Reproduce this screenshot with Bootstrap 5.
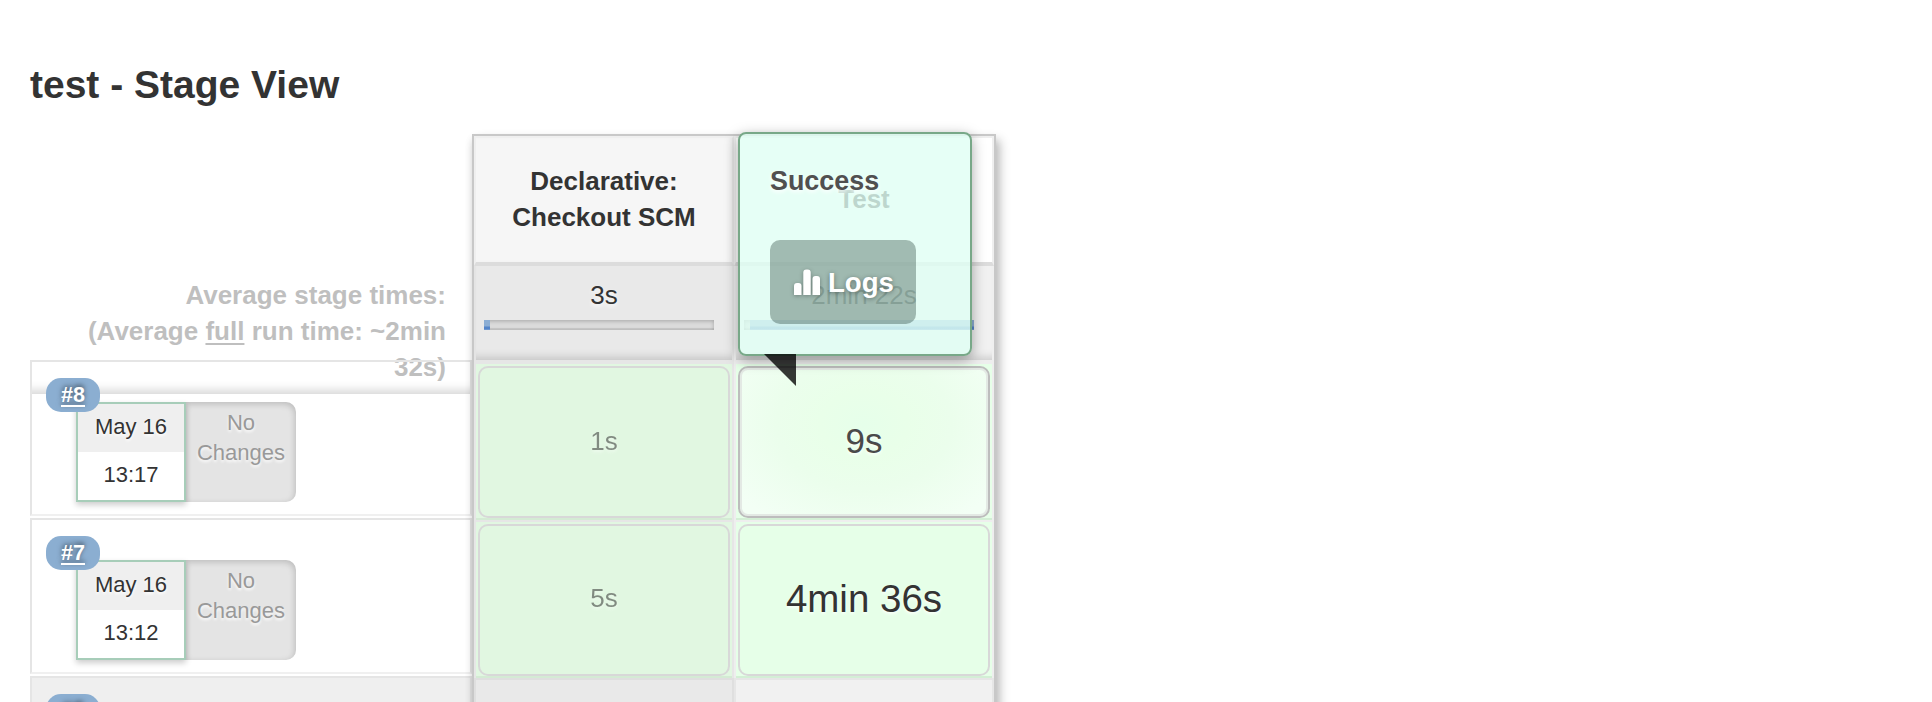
<!DOCTYPE html>
<html lang="en">
<head>
<meta charset="utf-8">
<title>test - Stage View</title>
<link href="https://cdn.jsdelivr.net/npm/bootstrap@5.3.0/dist/css/bootstrap.min.css" rel="stylesheet">
<style>
html, body { height: 702px; overflow: hidden; }
body { font: 26px/36px "Liberation Sans", Arial, sans-serif; color: #333; background: #fff; }
main { height: 702px; overflow: hidden; padding-left: 30px; }
.view-title { font-size: 39px; line-height: 44px; font-weight: 700; padding-top: 63px; height: 134px; }
.runs { width: 442px; }
.runs-head { height: 260px; padding: 143px 26px 0 40px; color: #bfbfbf; font-weight: 700;
  box-shadow: inset 0 -14px 10px -10px rgba(0,0,0,.16); }
.runs-head span { text-decoration-thickness: 1px; text-underline-offset: 3px; }
.runs-list { margin-top: -34px; }
.run { height: 156px; border: 2px solid #e5e5e5; border-bottom-color: #f0f0f0; margin-bottom: 2px; padding: 40px 0 0 44px; font-size: 22px; }
.run-muted { background: #efefef; }
.run-id { left: 14px; top: 16px; width: 54px; height: 34px; line-height: 34px; border-radius: 15px; background: #8baed1;
  color: #fff; font-weight: 700; font-size: 21.6px; text-shadow: 0 -2px 5px rgba(0,0,0,.55); text-underline-offset: 3px; }
.when { width: 110px; height: 100px; border: 2px solid #a7cdb9; box-shadow: 0 3px 6px rgba(0,0,0,.2); z-index: 1; text-shadow: 0 2px 3px #fff; }
.when div { height: 48px; line-height: 46px; }
.when div:first-child { background: #efefef; }
.changes { width: 110px; height: 100px; background: #e4e4e4; border-radius: 0 10px 10px 0; color: #999; line-height: 30px; padding: 6px 0 0;
  box-shadow: inset -1px 2px 6px rgba(0,0,0,.18); text-shadow: 0 2px 3px #fff; }
.board { width: 524px; height: 620px; border: 2px solid #c8c8c8; box-shadow: 4px 6px 10px rgba(0,0,0,.24), 0 6px 8px rgba(0,0,0,.1); display: grid; grid-template-columns: 260px 260px; align-content: start; }
.stage { height: 130px; border: 2px solid #efefef; border-bottom: 4px solid #dcdcdc; padding-bottom: 2px; font-weight: 700; background: #fff; }
.avg { height: 96px; border: solid #efefef; border-width: 0 2px; padding: 11px 8px 0; background: #f1f1f1; box-shadow: inset 0 -12px 10px -8px rgba(0,0,0,.18); text-shadow: 0 2px 4px #fff; line-height: 36px; }
.odd.stage { background: #f6f6f6; box-shadow: inset -4px 0 6px -3px rgba(0,0,0,.06); border-right-color: #e4e4e4; }
.odd.avg { background: #e9e9e9; border-color: #e4e4e4; }
.meter { width: 230px; height: 10px; margin-top: 7px; background: #dcdcdc; box-shadow: inset 0 1px 4px rgba(0,0,0,.25), inset 0 -2px 0 #ccc; }
.meter-fill { height: 10px; background: linear-gradient(#8caed4 0 55%, #467bc6 80%, #7ca2d4); }
.cell { height: 158px; border: 2px solid #eee; border-width: 2px 2px 0; background: #e6ffe8; box-shadow: inset 0 -2px 0 #d3efd5; padding: 2px 2px 4px; }
.odd.cell { background: #e1f7e1; border-color: #e6e6e6; box-shadow: inset 0 -2px 0 #d4ebd4; }
.first-row { border-top-width: 4px; height: 160px; margin-top: -2px; }
.pill { height: 152px; border: 2px solid #d8d8d8; border-radius: 10px; padding-bottom: 4px; text-shadow: 0 2px 3px rgba(255,255,255,.8); }
.first-row .pill { padding-bottom: 2px; }
.odd .pill > span { opacity: .55; }
.pill.hot { border-color: #bdbdbd; box-shadow: inset 0 0 0 2px #e3e9e4; font-size: 35px; color: #4a4a4a;
  background: radial-gradient(ellipse farthest-corner at 50% 38%, #e6ffea 0, #e9ffe9 25%, #ebfeec 50%, #f3fff5 90%); }
.pill.slow { font-size: 38.5px; padding-bottom: 2px; }
.empty-cell { height: 60px; background: #f1f1f1; border: 2px solid #e6e6e6; }
.odd.empty-cell { background: #e9e9e9; border-color: #dfdfdf; }
.tip { left: 264px; top: -4px; width: 234px; height: 224px; border: 2px solid #78a888; border-radius: 8px; background: rgba(224,255,244,.8);
  box-shadow: 0 4px 14px rgba(0,0,0,.34); padding: 29px 30px 0; font-weight: 700; font-size: 26.9px; color: #505050; text-shadow: 0 2px 4px #fff; z-index: 3; }
.tip::after { content: ""; position: absolute; left: 24px; top: 220px; width: 32px; height: 32px; background: rgba(0,0,0,.78); clip-path: polygon(0 0, 100% 0, 100% 100%); }
.logs { margin-top: 41px; width: 146px; height: 84px; border-radius: 10px; background: rgba(20,50,40,.33); color: #fff; padding: 2px 0 0 24px; gap: 7px; font-size: 27.6px; text-shadow: 0 1px 5px rgba(0,0,0,.4); }
.logs svg { filter: drop-shadow(0 1px 2px rgba(0,0,0,.3)); }
</style>
<script src="https://cdn.jsdelivr.net/npm/bootstrap@5.3.0/dist/js/bootstrap.bundle.min.js"></script>
</head>
<body>
<main>
  <h1 class="view-title m-0">test - Stage View</h1>
  <div class="d-flex">
    <section class="runs flex-shrink-0">
      <div class="runs-head text-end">Average stage times:<br>(Average <span class="text-decoration-underline">full</span> run time: ~2min 32s)</div>
      <div class="runs-list">
        <div class="run position-relative d-flex text-center">
          <a class="run-id position-absolute z-2" href="#">#8</a>
          <div class="when position-relative"><div>May 16</div><div>13:17</div></div>
          <div class="changes">No<br>Changes</div>
        </div>
        <div class="run position-relative d-flex text-center">
          <a class="run-id position-absolute z-2" href="#">#7</a>
          <div class="when position-relative"><div>May 16</div><div>13:12</div></div>
          <div class="changes">No<br>Changes</div>
        </div>
        <div class="run run-muted position-relative text-center">
          <a class="run-id position-absolute z-2" href="#">#6</a>
        </div>
      </div>
    </section>
    <section class="board position-relative flex-shrink-0">
      <div class="stage odd d-flex align-items-center justify-content-center text-center">Declarative:<br>Checkout SCM</div>
      <div class="stage d-flex align-items-center justify-content-center">Test</div>
      <div class="avg odd"><div class="text-center">3s</div><div class="meter"><div class="meter-fill" style="width:6px"></div></div></div>
      <div class="avg"><div class="text-center">2min 22s</div><div class="meter"><div class="meter-fill ms-auto" style="width:224px"></div></div></div>
      <div class="cell odd first-row"><div class="pill d-flex align-items-center justify-content-center"><span>1s</span></div></div>
      <div class="cell first-row"><div class="pill hot d-flex align-items-center justify-content-center"><span>9s</span></div></div>
      <div class="cell odd"><div class="pill d-flex align-items-center justify-content-center"><span>5s</span></div></div>
      <div class="cell"><div class="pill slow d-flex align-items-center justify-content-center"><span>4min 36s</span></div></div>
      <div class="empty-cell odd"></div>
      <div class="empty-cell"></div>
      <div class="tip position-absolute">
        <div>Success</div>
        <div class="logs d-flex align-items-center">
          <svg width="27" height="28" viewBox="0 0 27 28" fill="#fff"><path d="M0 26V17q0-3 3-3h1.500q3 0 3 3v9zM9.300 26V3.500q0-3 3-3h1.400q3 0 3 3V26zM18.500 26V10q0-3 3-3H23q3 0 3 3v16z"/></svg>
          <span>Logs</span>
        </div>
      </div>
    </section>
  </div>
</main>
</body>
</html>
